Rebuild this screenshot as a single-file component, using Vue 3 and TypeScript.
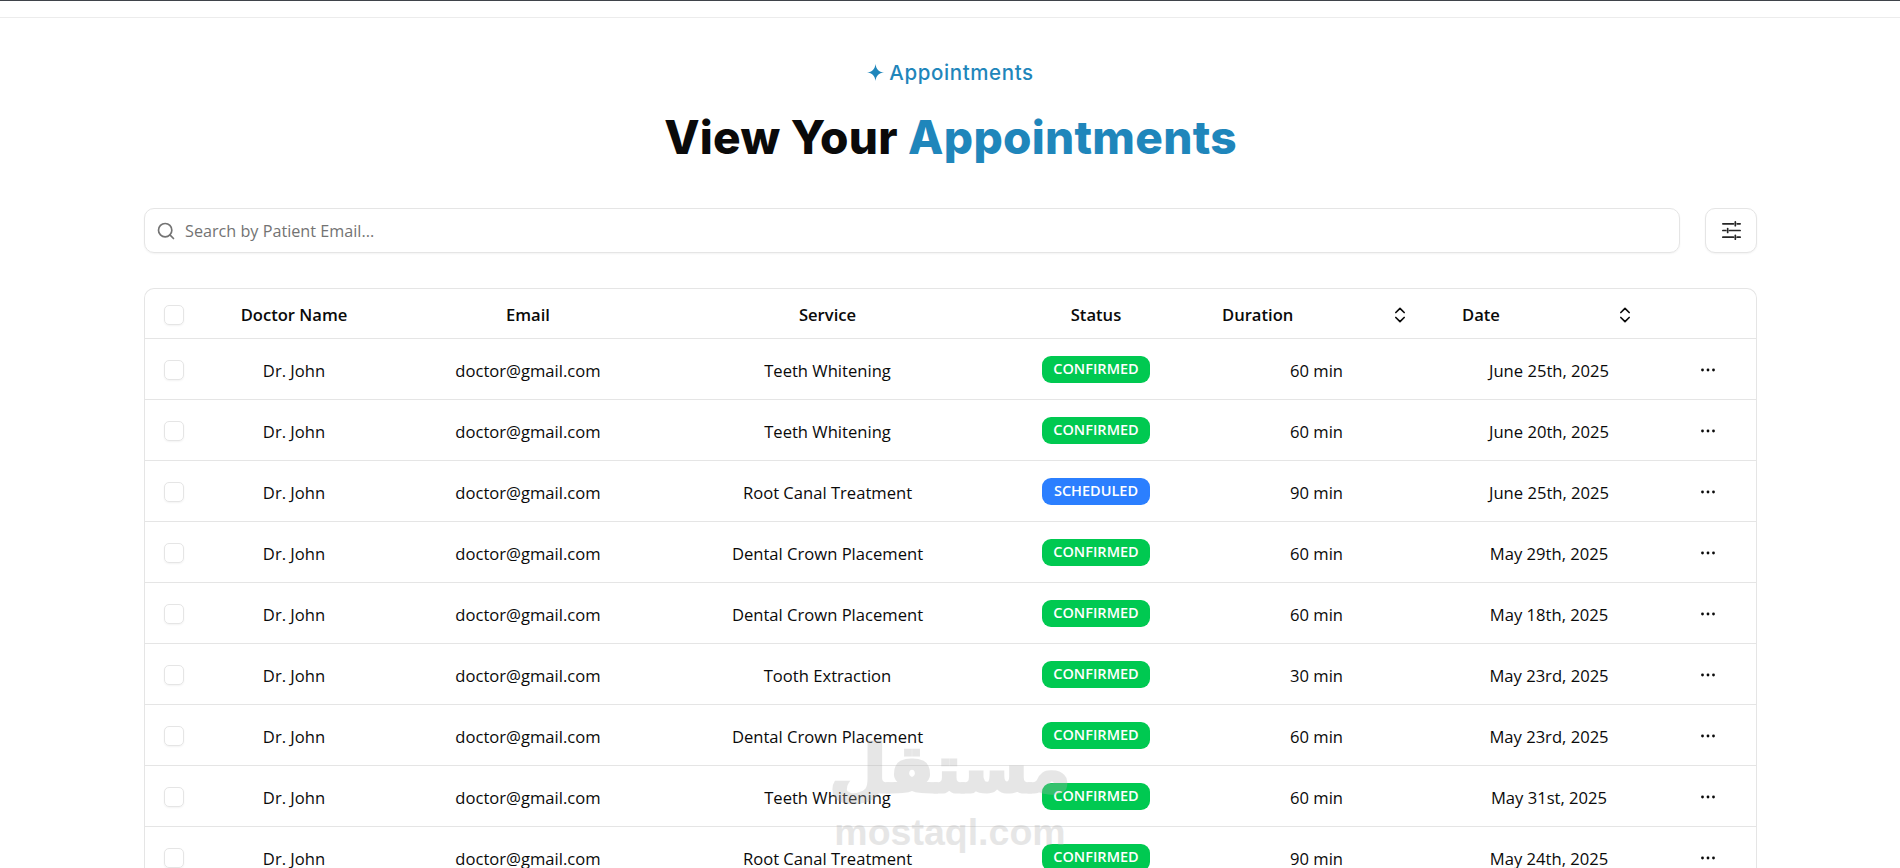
<template>
  <div class="page">
    <div class="topbar"></div>

    <main class="content">
      <header class="heading">
        <p class="eyebrow">
          <svg class="spark" viewBox="0 0 16 16" aria-hidden="true">
            <path d="M8 0 C8.6 5 11 7.4 16 8 C11 8.6 8.6 11 8 16 C7.4 11 5 8.6 0 8 C5 7.4 7.4 5 8 0 Z" />
          </svg>
          Appointments
        </p>
        <h1>View Your <span>Appointments</span></h1>
      </header>

      <div class="toolbar">
        <label class="search">
          <svg class="search-icon" viewBox="0 0 24 24" aria-hidden="true">
            <circle cx="11" cy="11" r="8" />
            <path d="m21 21-4.3-4.3" />
          </svg>
          <input type="text" placeholder="Search by Patient Email..." />
        </label>
        <button class="filter-btn" type="button" aria-label="Filter">
          <svg viewBox="0 0 24 24" aria-hidden="true">
            <path d="M3 5h11M18 5h3M16 3v4M3 12h3M10 12h11M8 10v4M3 19h11M18 19h3M16 17v4" />
          </svg>
        </button>
      </div>

      <div class="table">
        <div class="row head">
          <span class="check"></span>
          <span>Doctor Name</span>
          <span>Email</span>
          <span>Service</span>
          <span>Status</span>
          <span class="sortable duration">
            Duration
            <svg viewBox="0 0 24 24" aria-hidden="true"><path d="m7 15 5 5 5-5M7 9l5-5 5 5" /></svg>
          </span>
          <span class="sortable date">
            Date
            <svg viewBox="0 0 24 24" aria-hidden="true"><path d="m7 15 5 5 5-5M7 9l5-5 5 5" /></svg>
          </span>
          <span></span>
        </div>

        <div v-for="(item, i) in appointments" :key="i" class="row">
          <span class="check"></span>
          <span>Dr. John</span>
          <span>doctor@gmail.com</span>
          <span>{{ item.service }}</span>
          <span class="status-cell">
            <em class="badge" :class="item.status">{{ item.status }}</em>
          </span>
          <span>{{ item.duration }} min</span>
          <span>{{ item.date }}</span>
          <span class="more">
            <svg viewBox="0 0 16 4" aria-hidden="true">
              <circle cx="2.5" cy="2" r="1.4" />
              <circle cx="8" cy="2" r="1.4" />
              <circle cx="13.5" cy="2" r="1.4" />
            </svg>
          </span>
        </div>
      </div>
    </main>

    <div class="watermark" aria-hidden="true">
      <span class="wm-ar">مستقل</span>
      <span class="wm-en">mostaql.com</span>
    </div>
  </div>
</template>

<script setup lang="ts">
interface Appointment {
  service: string
  status: 'confirmed' | 'scheduled'
  duration: number
  date: string
}

const appointments: Appointment[] = [
  { service: 'Teeth Whitening', status: 'confirmed', duration: 60, date: 'June 25th, 2025' },
  { service: 'Teeth Whitening', status: 'confirmed', duration: 60, date: 'June 20th, 2025' },
  { service: 'Root Canal Treatment', status: 'scheduled', duration: 90, date: 'June 25th, 2025' },
  { service: 'Dental Crown Placement', status: 'confirmed', duration: 60, date: 'May 29th, 2025' },
  { service: 'Dental Crown Placement', status: 'confirmed', duration: 60, date: 'May 18th, 2025' },
  { service: 'Tooth Extraction', status: 'confirmed', duration: 30, date: 'May 23rd, 2025' },
  { service: 'Dental Crown Placement', status: 'confirmed', duration: 60, date: 'May 23rd, 2025' },
  { service: 'Teeth Whitening', status: 'confirmed', duration: 60, date: 'May 31st, 2025' },
  { service: 'Root Canal Treatment', status: 'confirmed', duration: 90, date: 'May 24th, 2025' }
]
</script>

<style>
html,
body {
  height: 100%;
  overflow: hidden;
  background: #fff;
}
</style>

<style scoped>
.page {
  position: relative;
  height: 868px;
  overflow: hidden;
  background: #fff;
  color: #0a0a0a;
  font-family: "Open Sans", "Noto Sans", sans-serif;
  font-size: 16px;
}

.topbar {
  height: 18px;
  box-sizing: border-box;
  border-top: 1px solid #3f434a;
  border-bottom: 1px solid #ececec;
}

.content {
  padding: 0 143px 0 144px;
}

.heading {
  text-align: center;
  padding-top: 41px;
}

.eyebrow {
  margin: 0;
  display: flex;
  align-items: center;
  justify-content: center;
  gap: 5px;
  height: 27px;
  color: #1f86bb;
  font-family: Inter, sans-serif;
  font-size: 20.5px;
  letter-spacing: 0.6px;
  font-weight: 500;
}

.spark {
  width: 17px;
  height: 19px;
  fill: #1f86bb;
}

h1 {
  margin: 23px 0 0;
  font-family: Inter, sans-serif;
  font-size: 46px;
  line-height: 56px;
  font-weight: 800;
  letter-spacing: 0.27px;
}

h1 span {
  color: #1f86bb;
}

.toolbar {
  display: flex;
  gap: 25px;
  margin-top: 43px;
}

.search {
  flex: 1;
  height: 45px;
  box-sizing: border-box;
  display: flex;
  align-items: center;
  gap: 9px;
  padding: 0 11px;
  border: 1px solid #e5e5e5;
  border-radius: 10px;
  box-shadow: 0 1px 2px rgba(0, 0, 0, 0.05);
}

.search-icon {
  width: 20px;
  height: 20px;
  fill: none;
  stroke: #737373;
  stroke-width: 2;
  stroke-linecap: round;
  stroke-linejoin: round;
}

.search input {
  flex: 1;
  border: 0;
  outline: 0;
  padding: 0;
  background: transparent;
  font: inherit;
  font-size: 16.2px;
}

.search input::placeholder {
  color: #737373;
  opacity: 1;
}

.filter-btn {
  width: 52px;
  height: 45px;
  padding: 0;
  display: flex;
  align-items: center;
  justify-content: center;
  background: #fff;
  border: 1px solid #e5e5e5;
  border-radius: 10px;
  box-shadow: 0 1px 2px rgba(0, 0, 0, 0.05);
}

.filter-btn svg {
  width: 23px;
  height: 23px;
  fill: none;
  stroke: #262626;
  stroke-width: 1.8;
  stroke-linecap: round;
}

.table {
  margin-top: 35px;
  border: 1px solid #e5e5e5;
  border-bottom: 0;
  border-radius: 10px 10px 0 0;
}

.row {
  display: grid;
  grid-template-columns: 56px 186px 282px 317px 220px 221px 244px 85px;
  align-items: center;
  height: 61px;
  box-sizing: border-box;
  border-top: 1px solid #e5e5e5;
  text-align: center;
  font-size: 16.6px;
}

.row > span {
  position: relative;
  top: 1px;
}

.row.head {
  height: 49px;
  border-top: 0;
  font-weight: 600;
}

.row > .status-cell {
  top: 0;
}

.status-cell {
  display: flex;
  justify-content: center;
}

.check {
  width: 20px;
  height: 20px;
  box-sizing: border-box;
  margin-left: 19px;
  border: 1px solid #e5e5e5;
  border-radius: 5px;
  box-shadow: 0 1px 2px rgba(0, 0, 0, 0.05);
}

.sortable {
  display: flex;
  align-items: center;
  justify-content: space-between;
}

.sortable svg {
  width: 20px;
  height: 20px;
  fill: none;
  stroke: #0a0a0a;
  stroke-width: 2;
  stroke-linecap: round;
  stroke-linejoin: round;
}

.duration {
  padding: 0 17px 0 16px;
}

.date {
  padding: 0 36px 0 35px;
}

.badge {
  display: inline-block;
  width: 108px;
  height: 27px;
  line-height: 26px;
  box-sizing: border-box;
  border-radius: 9px;
  color: #fff;
  font-size: 14.5px;
  font-style: normal;
  font-weight: 600;
  text-transform: uppercase;
}

.badge.confirmed {
  background: #00c951;
}

.badge.scheduled {
  background: #2b7fff;
}

.more {
  display: flex;
  padding-left: 29px;
}

.more svg {
  width: 16px;
  height: 4px;
  fill: #0a0a0a;
}

.watermark {
  position: absolute;
  left: 835px;
  top: 728px;
  width: 230px;
  display: flex;
  flex-direction: column;
  align-items: center;
  color: #b0b0b0;
  opacity: 0.3;
  font-family: "DejaVu Sans", sans-serif;
  font-weight: 700;
  pointer-events: none;
}

.wm-ar {
  font-size: 66px;
  line-height: 84px;
  -webkit-text-stroke: 3px #b0b0b0;
}

.wm-en {
  font-family: "Liberation Sans", sans-serif;
  font-size: 37.5px;
  line-height: 40px;
}
</style>
